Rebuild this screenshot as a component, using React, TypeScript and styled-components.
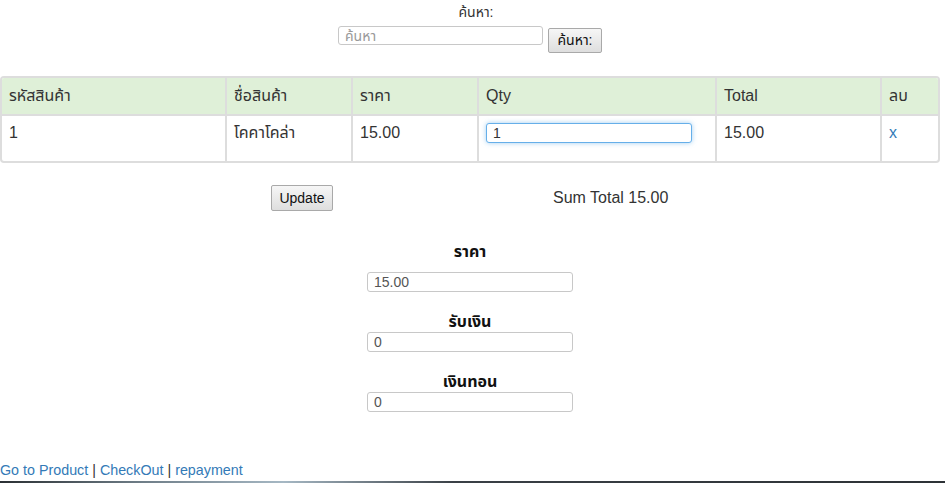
import React from "react";
import styled, { createGlobalStyle } from "styled-components";

const Global = createGlobalStyle`
  html, body { margin: 0; padding: 0; background: #fff; }
  body {
    font-family: "Liberation Sans", Arial, "Noto Sans Thai", "Tahoma", sans-serif;
    color: #333;
    font-size: 14px;
  }
  * { box-sizing: border-box; }
`;

const Page = styled.div`
  width: 940px;
  padding-top: 2px;
  display: flex;
  flex-direction: column;
  height: 483px;
`;

const SearchBlock = styled.div`
  display: flex;
  flex-direction: column;
  align-items: center;
`;

const SearchLabel = styled.div`
  font-size: 14px;
  line-height: 20px;
  color: #333;
  padding-left: 12px;
`;

const SearchRow = styled.div`
  display: flex;
  align-items: flex-start;
  gap: 5px;
  margin-top: 4px;
`;

const TextInput = styled.input<{ $w: number; $h: number }>`
  width: ${(p) => p.$w}px;
  height: ${(p) => p.$h}px;
  border: 1px solid #c8c8c8;
  border-radius: 3px;
  padding: 0 6px;
  font-family: inherit;
  font-size: 14px;
  color: #555;
  background: #fff;
  outline: none;
  &::placeholder { color: #999; }
`;

const FocusInput = styled(TextInput)`
  border-color: #66afe9;
  box-shadow: 0 0 5px rgba(102, 175, 233, 0.6);
  color: #333;
  margin-top: 1px;
`;

const Button = styled.button<{ $w: number; $h: number }>`
  width: ${(p) => p.$w}px;
  height: ${(p) => p.$h}px;
  border: 1px solid #a9a9a9;
  border-radius: 2px;
  background: linear-gradient(#f6f6f6, #dedede);
  font-family: inherit;
  font-size: 14px;
  color: #111;
  padding: 0;
`;

const SearchButton = styled(Button)`
  margin-top: 2px;
`;

const TableWrap = styled.div`
  margin-top: 23px;
  width: 940px;
  border: 2px solid #ddd;
  border-radius: 4px;
  overflow: hidden;
`;

const Table = styled.table`
  border-collapse: collapse;
  width: 100%;
  table-layout: fixed;
  font-size: 16px;
  color: #333;
`;

const Th = styled.th<{ $w: number }>`
  width: ${(p) => p.$w}px;
  background: #dff0d8;
  text-align: left;
  font-weight: normal;
  padding: 8px 8px 8px 7px;
  line-height: 20px;
  height: 36px;
  border-left: 2px solid #ddd;
  border-bottom: 2px solid #ddd;
  &:first-child { border-left: none; }
`;

const Td = styled.td`
  padding: 6px 8px 0 7px;
  height: 46px;
  vertical-align: top;
  line-height: 22px;
  border-left: 2px solid #ddd;
  &:first-child { border-left: none; }
`;

const Link = styled.a`
  color: #337ab7;
  text-decoration: none;
`;

const DelLink = styled(Link)`
  font-size: 16px;
`;

const ActionRow = styled.div`
  display: flex;
  align-items: center;
  margin-top: 22px;
  padding-left: 271px;
  height: 26px;
`;

const SumText = styled.div`
  margin-left: 220px;
  font-size: 16px;
  color: #333;
`;

const PayBlock = styled.div`
  display: flex;
  flex-direction: column;
  align-items: center;
  margin-top: 30px;
`;

const PayLabel = styled.div<{ $gap: number; $top: number }>`
  font-size: 16px;
  font-weight: bold;
  line-height: 22px;
  color: #111;
  margin-top: ${(p) => p.$top}px;
  margin-bottom: ${(p) => p.$gap}px;
`;

const Footer = styled.div`
  margin-top: auto;
  margin-bottom: 3px;
  font-size: 14.3px;
  line-height: 20px;
  color: #333;
`;

const TaskbarEdge = styled.div`
  position: fixed;
  left: 0;
  right: 0;
  bottom: 0;
  height: 2px;
  background: linear-gradient(90deg, #2a2f33 0%, #6f7e88 15%, #a6b8c4 30%, #3a4046 48%, #2d3236 100%);
`;

const cols = [
  { label: "รหัสสินค้า", w: 224 },
  { label: "ชื่อสินค้า", w: 126 },
  { label: "ราคา", w: 126 },
  { label: "Qty", w: 238 },
  { label: "Total", w: 165 },
  { label: "ลบ", w: 57 },
];

export default function App() {
  return (
    <>
      <Global />
      <Page>
        <SearchBlock>
          <SearchLabel>ค้นหา:</SearchLabel>
          <SearchRow>
            <TextInput $w={205} $h={19} placeholder="ค้นหา" />
            <SearchButton $w={54} $h={25}>ค้นหา:</SearchButton>
          </SearchRow>
        </SearchBlock>

        <TableWrap>
          <Table>
            <thead>
              <tr>
                {cols.map((c) => (
                  <Th key={c.label} $w={c.w}>{c.label}</Th>
                ))}
              </tr>
            </thead>
            <tbody>
              <tr>
                <Td>1</Td>
                <Td>โคคาโคล่า</Td>
                <Td>15.00</Td>
                <Td>
                  <FocusInput $w={206} $h={20} defaultValue="1" />
                </Td>
                <Td>15.00</Td>
                <Td>
                  <DelLink href="#">x</DelLink>
                </Td>
              </tr>
            </tbody>
          </Table>
        </TableWrap>

        <ActionRow>
          <Button $w={62} $h={26}>Update</Button>
          <SumText>Sum Total 15.00</SumText>
        </ActionRow>

        <PayBlock>
          <PayLabel $top={0} $gap={9}>ราคา</PayLabel>
          <TextInput $w={206} $h={20} defaultValue="15.00" />
          <PayLabel $top={19} $gap={-1}>รับเงิน</PayLabel>
          <TextInput $w={206} $h={20} defaultValue="0" />
          <PayLabel $top={19} $gap={-1}>เงินทอน</PayLabel>
          <TextInput $w={206} $h={20} defaultValue="0" />
        </PayBlock>

        <Footer>
          <Link href="#">Go to Product</Link> | <Link href="#">CheckOut</Link> |{" "}
          <Link href="#">repayment</Link>
        </Footer>
      </Page>
      <TaskbarEdge />
    </>
  );
}
